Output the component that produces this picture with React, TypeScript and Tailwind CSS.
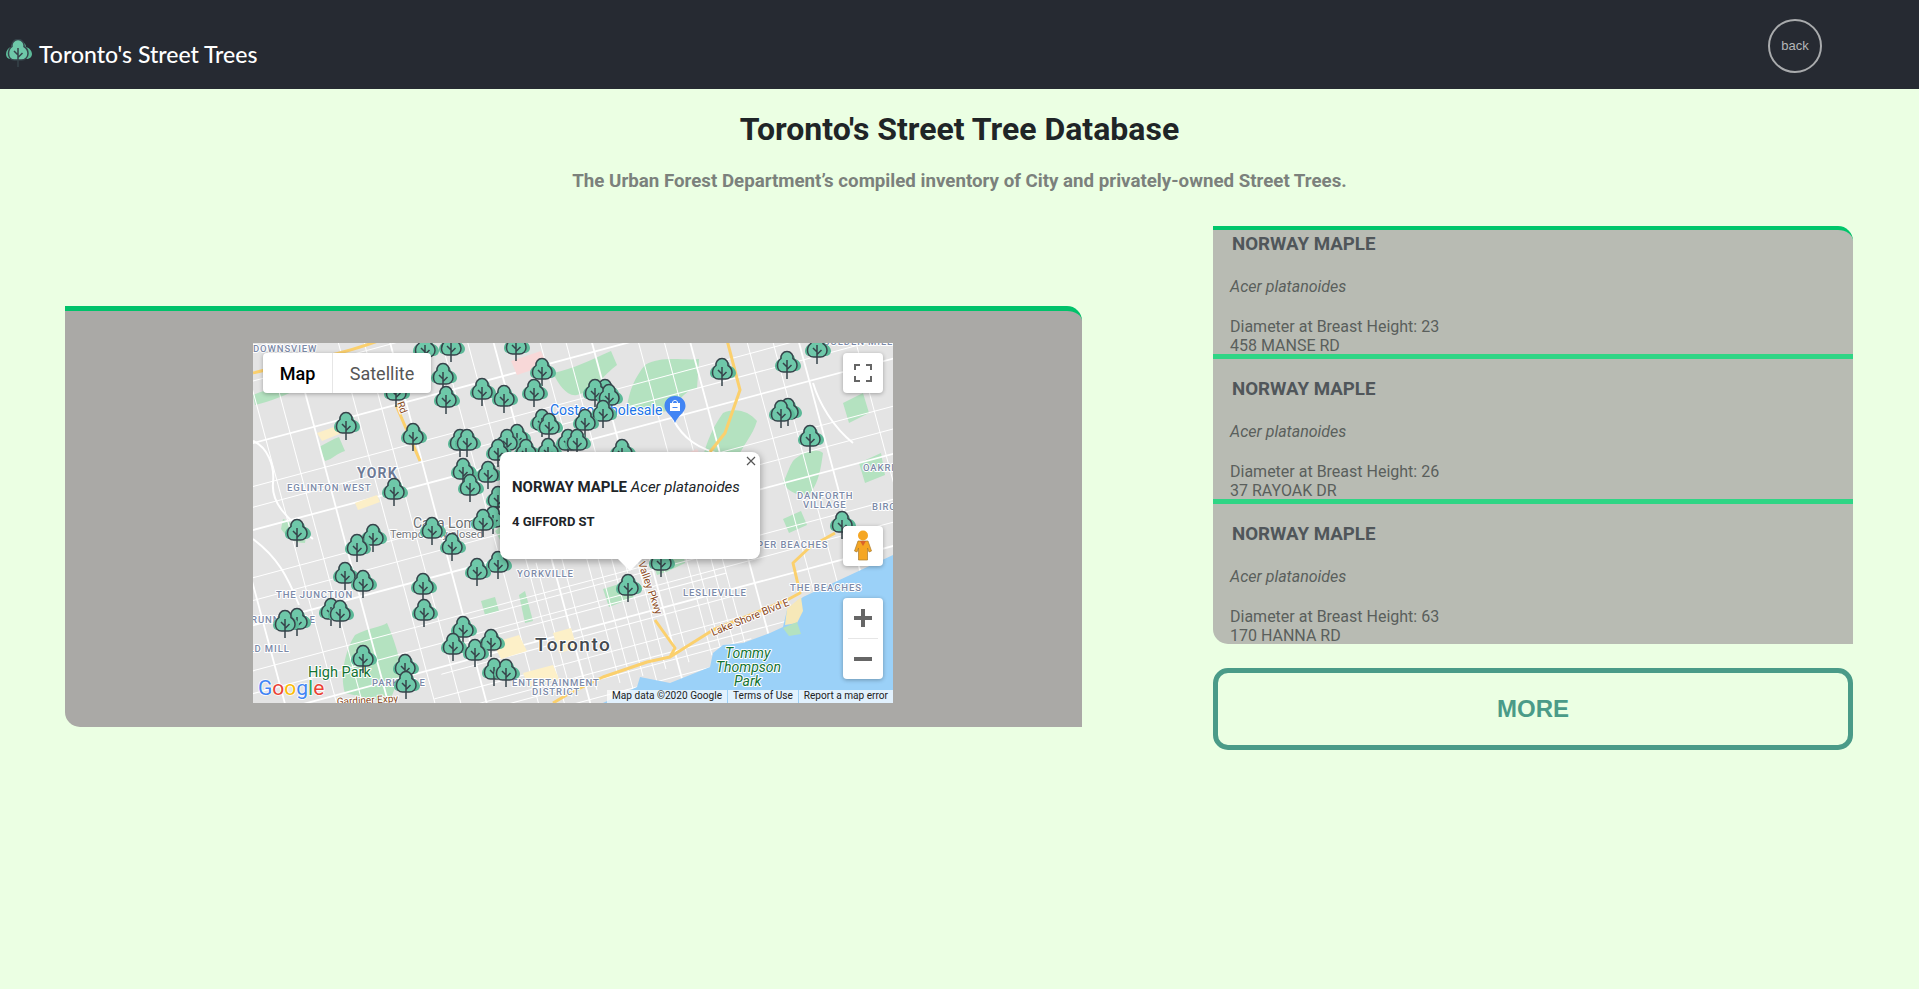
const trees: [number, number][] = [
  [425, 350], [451, 348], [516, 347], [542, 372], [443, 377], [446, 400], [396, 393], [482, 392],
  [504, 399], [534, 393], [542, 423], [549, 427], [346, 426], [413, 437], [460, 443], [467, 443],
  [517, 438], [507, 443], [498, 453], [526, 453], [548, 452], [568, 443], [463, 472], [470, 488],
  [488, 475], [394, 492], [498, 500], [817, 350], [787, 365], [722, 372], [605, 393], [595, 393],
  [609, 398], [603, 414], [585, 423], [577, 443], [622, 453], [788, 412], [781, 414], [810, 439],
  [842, 525], [297, 533], [373, 538], [357, 548], [432, 531], [452, 547], [493, 520], [483, 523],
  [498, 565], [477, 572], [345, 576], [363, 584], [423, 587], [424, 613], [331, 612], [340, 614],
  [297, 622], [285, 624], [463, 630], [491, 643], [453, 647], [475, 653], [363, 659], [661, 563],
  [628, 588], [405, 668], [406, 685], [494, 672], [506, 673],
];

const mainAcross = [-90, 20, 104, 196, 285, 380];
const mainDown = [-5, 95, 190, 290, 385, 480, 585, 700];
const minorAcross = [-40, 62, 82, 150, 172, 240, 262, 330, 355, 430];
const minorDown = [45, 70, 140, 165, 240, 265, 335, 360, 430, 455, 535, 560, 640];
const denseAcross = [246, 268, 292, 314, 338, 360];
const denseDown = [274, 300, 324, 348, 372, 396, 420, 444];

const parks = [
  "M0 52c14-6 30-8 42-16l6 8c-14 8-30 14-46 18z",
  "M66 104c8-4 14-8 20-10l6 14c-8 2-12 8-20 10z",
  "M30 176c8 2 14 10 24 10l-2 14c-12 0-20-8-24-14z",
  "M92 350c-6-20 2-46 10-58c10-6 26-8 32-12c6 14 14 36 14 50l-12 30z",
  "M254 178c6 8 12 20 18 28l-12 10c-8-8-14-22-18-28z",
  "M300 30c20-4 40-14 58-22l6 14c-14 10-22 26-40 30c-10 2-18-10-24-22z",
  "M392 22c16-10 40-4 54 -6l-2 30c-14 0-18 16-30 22c-16 4-30 4-40-4c2-16 8-30 18-42z",
  "M470 70c12-6 26-2 34 8c-4 14-14 24-20 38c-10 8-26 6-34-2c4-16 10-30 20-44z",
  "M540 118c8-8 22-14 30-8c-2 14-4 30-14 42c-10 2-22-4-26-12c4-8 6-16 10-22z",
  "M590 60l20-10l6 20l-20 10zM606 120l22-10l4 22l-20 8z",
  "M228 258l14-4l4 14l-14 4zM272 248l8 30l-8 2l-6-28z",
  "M350 246l26-8l6 16l-26 10zM530 176l18-8l6 14l-18 8z",
  "M400 220c8-4 20-10 30-10l2 10c-8 4-20 10-28 12z",
];

const waterPath =
  "M640 212L550 254L534 267L530 284L517 290L490 300L470 302L460 310L457 324L417 340L387 334L384 344L350 360L640 360Z";

const poi: [string, number, number][] = [
  ["DOWNSVIEW", 0, 9],
  ["EGLINTON WEST", 34, 148],
  ["THE JUNCTION", 23, 255],
  ["RUNNYMEDE", -2, 280],
  ["OLD MILL", -12, 309],
  ["PARKDALE", 119, 343],
  ["YORKVILLE", 264, 234],
  ["LESLIEVILLE", 430, 253],
  ["THE BEACHES", 537, 248],
  ["UPPER BEACHES", 490, 205],
  ["DANFORTH", 544, 156],
  ["VILLAGE", 550, 165],
  ["OAKRIDGE", 610, 128],
  ["BIRCH", 619, 167],
  ["GOLDEN MILLS", 570, 2],
  ["ENTERTAINMENT", 259, 343],
  ["DISTRICT", 279, 352],
];

function TreeMarker({ x, y }: { x: number; y: number }) {
  return (
    <g transform={`translate(${x} ${y})`}>
      <path
        d="M1-12C5-12 8-9 8-6C11.500-5 14-2 14 1C14 4 11.500 6 8 6H-7C-10 6-12 4-12 1C-12-2-10-5-7-6C-7-9-3-12 1-12Z"
        fill="#5cb998"
      />
      <path
        d="M0-13.500C4-13.500 6.500-10 6-6.500C8.500-5 10-2.500 10 0.500C10 4.500 7 7 3.500 7H-3.500C-7 7-9.500 4.500-9.500 0.500C-9.500-2.500-8-5-6-6.500C-6.500-10-4-13.500 0-13.500Z"
        fill="#6ec8a9"
        stroke="#36434a"
        strokeWidth="1.500"
      />
      <path d="M0-5V14M0 2L-4-2M0 4.500L4.500 0" fill="none" stroke="#36434a" strokeWidth="1.500" />
    </g>
  );
}

function StreetMap() {
  return (
    <svg width="640" height="360" viewBox="0 0 640 360" className="block" fontFamily="Roboto, sans-serif">
      <defs>
        <clipPath id="downtown">
          <path d="M215 240L450 170L500 300L300 360L180 360Z" />
        </clipPath>
      </defs>
      <rect width="640" height="360" fill="#e4e4e4" />
      {parks.map((d) => (
        <path key={d} d={d} fill="#b4e2c0" />
      ))}
      <g transform="rotate(-15 320 180)" stroke="#ffffff">
        {minorAcross.map((v) => (
          <line key={`a${v}`} x1="-150" x2="800" y1={v} y2={v} strokeWidth="1" />
        ))}
        {minorDown.map((v) => (
          <line key={`b${v}`} x1={v} x2={v} y1="-150" y2="520" strokeWidth="1" />
        ))}
        {mainAcross.map((v) => (
          <line key={`c${v}`} x1="-150" x2="800" y1={v} y2={v} strokeWidth="1.800" />
        ))}
        {mainDown.map((v) => (
          <line key={`d${v}`} x1={v} x2={v} y1="-150" y2="520" strokeWidth="1.800" />
        ))}
      </g>
      <path
        d="M0 98C14 104 22 122 20 140C18 160 34 176 60 196M0 196C24 214 34 232 46 262M420 76C430 96 446 106 470 112M560 40C566 60 580 84 600 100"
        fill="none"
        stroke="#ffffff"
        strokeWidth="2"
      />
      <g clipPath="url(#downtown)">
        <g transform="rotate(-15 320 180)" stroke="#ffffff" strokeWidth="1">
          {denseAcross.map((v) => (
            <line key={`e${v}`} x1="100" x2="600" y1={v} y2={v} />
          ))}
          {denseDown.map((v) => (
            <line key={`f${v}`} x1={v} x2={v} y1="150" y2="500" />
          ))}
        </g>
        <path d="M240 300l26-8 8 16-26 8zM300 290l18-5 6 20-18 5zM270 330l30-8 6 14-30 8z" fill="#fdf0c8" />
      </g>
      <path d="M64 90l34-12 3 7-32 13zM102 160l22-8 3 7-22 8z" fill="#fcefc8" />
      <path d="M420 116l24-10 6 12-24 10z" fill="#f9dcdc" />
      <path d="M258 18l30-10 6 14-30 10z" fill="#f8d8d8" />
      <path d={waterPath} fill="#9bd1f8" />
      <path d="M534 266l14-12l2 14l-6 12l-12 2z" fill="#f6e8b8" />
      <path d="M530 285l14-6l4 12l-12 2z" fill="#b4e2c0" />
      <path
        d="M0 30C40 20 90 12 130-4M143 62L167 118M474-3L487 47L472 90L457 109M402 277L422 305L417 314L394 319L350 334L317 350L300 360M417 314L460 287L534 257L547 250L540 220L557 204L582 190"
        fill="none"
        stroke="#fbd06d"
        strokeWidth="3"
        strokeLinejoin="round"
      />
      <g stroke="#ffffff" strokeWidth="2" strokeLinejoin="round" paintOrder="stroke" fontWeight="500">
        {poi.map(([label, x, y]) => (
          <text key={label} x={x} y={y} fontSize="9.500" fill="#7c8aa8" letterSpacing="0.900">
            {label}
          </text>
        ))}
        <text x="104" y="135" fontSize="14" fontWeight="700" fill="#6d7a96" letterSpacing="1.200">YORK</text>
        <text x="282" y="308" fontSize="19" fill="#444a50" letterSpacing="1.500">Toronto</text>
        <text x="297" y="72" fontSize="14" fill="#1a73e8" fontWeight="400">Costco Wholesale</text>
        <text x="160" y="185" fontSize="14" fill="#6b6f73" fontWeight="400">Casa Loma</text>
        <text x="137" y="195" fontSize="11" fill="#74787c" fontWeight="400">Temporarily closed</text>
        <text x="55" y="334" fontSize="14.500" fill="#137333" fontWeight="400">High Park</text>
        <text x="472" y="315" fontSize="14" fill="#137333" fontStyle="italic" fontWeight="400">Tommy</text>
        <text x="463" y="329" fontSize="14" fill="#137333" fontStyle="italic" fontWeight="400">Thompson</text>
        <text x="481" y="343" fontSize="14" fill="#137333" fontStyle="italic" fontWeight="400">Park</text>
        <text x="0" y="0" fontSize="10.500" fill="#8a4a1c" fontWeight="400" transform="translate(460 293) rotate(-22)">
          Lake Shore Blvd E
        </text>
        <text x="0" y="0" fontSize="10.500" fill="#8a4a1c" fontWeight="400" transform="translate(378 200) rotate(71)">
          Don Valley Pkwy
        </text>
        <text x="0" y="0" fontSize="10" fill="#8a4a1c" fontWeight="400" transform="translate(84 362) rotate(-3)">
          Gardiner Expy
        </text>
        <text x="0" y="0" fontSize="10" fill="#8a4a1c" fontWeight="400" transform="translate(144 60) rotate(70)">
          Rd
        </text>
      </g>
      <path d="M422 53c-6.500 0-10.500 4.500-10.500 10c0 6.500 7.500 9 10.500 17c3-8 10.500-10.500 10.500-17c0-5.500-4-10-10.500-10z" fill="#4285f4" />
      <path d="M417 60h10v8h-10z" fill="#ffffff" />
      <path d="M419.500 60c0-3.500 5-3.500 5 0" fill="none" stroke="#ffffff" strokeWidth="1" />
      <path d="M419.500 64.500h5" fill="none" stroke="#4285f4" strokeWidth="1" />
      {trees.map(([x, y]) => (
        <TreeMarker key={`${x}-${y}`} x={x - 253} y={y - 343} />
      ))}
      <text x="5" y="352" fontSize="21" stroke="#ffffff" strokeWidth="1.500" paintOrder="stroke">
        <tspan fill="#4285f4">G</tspan>
        <tspan fill="#ea4335">o</tspan>
        <tspan fill="#fbbc05">o</tspan>
        <tspan fill="#4285f4">g</tspan>
        <tspan fill="#34a853">l</tspan>
        <tspan fill="#ea4335">e</tspan>
      </text>
    </svg>
  );
}

function MapOverlay() {
  return (
    <>
      <div className="absolute left-[10px] top-[10px] flex h-[40px] w-[168px] rounded-sm bg-white text-[18px] shadow-[0_1px_4px_rgba(0,0,0,0.3)]">
        <div className="flex w-[70px] items-center justify-center border-r border-[#e6e6e6] font-medium text-black">Map</div>
        <div className="flex flex-1 items-center justify-center text-[#565656]">Satellite</div>
      </div>
      <div className="absolute right-[10px] top-[10px] flex h-[40px] w-[40px] items-center justify-center rounded-sm bg-white shadow-[0_1px_4px_rgba(0,0,0,0.3)]">
        <svg width="18" height="18" viewBox="0 0 18 18" fill="none" stroke="#666666" strokeWidth="2">
          <path d="M1 6V1h5M12 1h5v5M17 12v5h-5M6 17H1v-5" />
        </svg>
      </div>
      <div className="absolute right-[10px] top-[183px] flex h-[40px] w-[40px] items-center justify-center rounded-sm bg-white shadow-[0_1px_4px_rgba(0,0,0,0.3)]">
        <svg width="18" height="32" viewBox="0 0 18 32">
          <circle cx="9" cy="5.500" r="5" fill="#f5a623" />
          <path d="M4 11h10l3.500 10-2.500 1-1.500-4v12H4.500V18L3 22l-2.500-1z" fill="#f5a623" stroke="#a97b2c" strokeWidth="0.700" />
          <path d="M6 11h6l-3 5z" fill="#d9632a" />
        </svg>
      </div>
      <div className="absolute right-[10px] top-[255px] flex h-[81px] w-[40px] flex-col items-center rounded-sm bg-white shadow-[0_1px_4px_rgba(0,0,0,0.3)]">
        <svg width="18" height="40" viewBox="0 0 18 40">
          <path d="M0 20h18M9 11v18" stroke="#666666" strokeWidth="4" />
        </svg>
        <div className="h-px w-[30px] bg-[#e6e6e6]" />
        <svg width="18" height="40" viewBox="0 0 18 40">
          <path d="M0 20h18" stroke="#666666" strokeWidth="4" />
        </svg>
      </div>
      <div className="absolute left-[247px] top-[109px] h-[107px] w-[260px] rounded-lg bg-white font-['Roboto',sans-serif] text-[#202428] shadow-[0_2px_7px_1px_rgba(0,0,0,0.3)]">
        <svg width="12" height="12" viewBox="0 0 12 12" className="absolute right-[3px] top-[3px]" stroke="#555555" strokeWidth="1.200">
          <path d="M2 2l8 8M10 2l-8 8" />
        </svg>
        <p className="whitespace-nowrap pl-[12px] pt-[26px] text-[15px] leading-[18px]">
          <span className="font-bold">NORWAY MAPLE</span> <em>Acer platanoides</em>
        </p>
        <p className="pl-[12px] pt-[18px] text-[13px] font-bold leading-[15px]">4 GIFFORD ST</p>
        <div className="absolute left-[118px] top-[107px] h-0 w-0 border-x-[12px] border-t-[12px] border-x-transparent border-t-white" />
      </div>
      <div className="absolute bottom-0 right-0 flex h-[13px] gap-px text-[10.100px] leading-[12px] text-[#222222]">
        <span className="bg-[#ffffff]/70 px-[5px]">Map data ©2020 Google</span>
        <span className="bg-[#ffffff]/70 px-[5px]">Terms of Use</span>
        <span className="bg-[#ffffff]/70 px-[5px]">Report a map error</span>
      </div>
    </>
  );
}

const records = [
  { diameter: 23, address: "458 MANSE RD" },
  { diameter: 26, address: "37 RAYOAK DR" },
  { diameter: 63, address: "170 HANNA RD" },
];

export default function App() {
  return (
    <div className="min-h-screen bg-[#ebffe3] font-['Roboto',sans-serif]">
      <header className="flex h-[89px] items-start justify-between bg-[#262a32]">
        <div className="ml-[5px] mt-[38px] flex items-center gap-[6px]">
          <svg width="28" height="30" viewBox="-13 -14 28 30">
            <TreeMarker x={0} y={0} />
          </svg>
          <span className="font-['Lato',sans-serif] text-[23px] font-medium leading-[32px] text-white">Toronto's Street Trees</span>
        </div>
        <button className="mr-[97px] mt-[19px] flex h-[54px] w-[54px] items-center justify-center rounded-full border-2 border-[#a9abad] font-['Liberation_Sans',sans-serif] text-[13px] text-[#b4b6b8]">
          back
        </button>
      </header>

      <h1 className="pt-[21px] text-center text-[32px] font-bold leading-[38px] text-[#1f2527]">Toronto's Street Tree Database</h1>
      <p className="mt-[22px] text-center text-[18.720px] font-bold leading-[22px] text-[#7b817c]">
        The Urban Forest Department’s compiled inventory of City and privately-owned Street Trees.
      </p>

      <div className="mt-[34px] flex items-start justify-between pl-[65px] pr-[66px]">
        <section className="mt-[80px] w-[1017px] rounded-tr-[15px] rounded-bl-[15px] border-t-[5px] border-[#00c26a] bg-[#aaa9a6] pb-[24px] pl-[188px] pt-[32px]">
          <div className="relative h-[360px] w-[640px] overflow-hidden">
            <StreetMap />
            <MapOverlay />
          </div>
        </section>

        <div className="w-[640px]">
          <div className="h-[418px] overflow-hidden rounded-tr-[15px] rounded-bl-[15px] border-t-4 border-[#00c66b] bg-[#b8bbb3]">
            {records.map((r, i) => (
              <article
                key={r.address}
                className={
                  i === 0
                    ? "h-[124px] overflow-hidden pl-[17px] pt-[4px] text-[16px] leading-[19px] text-[#5a5f5c]"
                    : "h-[145px] overflow-hidden border-t-[5px] border-[#2fd585] pl-[17px] pt-[20px] text-[16px] leading-[19px] text-[#5a5f5c]"
                }
              >
                <h3 className="pl-[2px] text-[18.720px] font-bold leading-[20px] text-[#50565a]">NORWAY MAPLE</h3>
                <p className="mt-[23px] italic">Acer platanoides</p>
                <p className="mt-[21px]">Diameter at Breast Height: {r.diameter}</p>
                <p>{r.address}</p>
              </article>
            ))}
          </div>
          <button className="mt-[24px] flex h-[82px] w-full items-center justify-center rounded-[15px] border-[5px] border-[#4a9b88] font-['Liberation_Sans',sans-serif] text-[24px] font-bold text-[#4a9b88]">
            MORE
          </button>
        </div>
      </div>
    </div>
  );
}
